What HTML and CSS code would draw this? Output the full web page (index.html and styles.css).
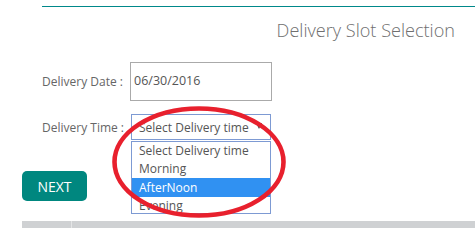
FILE: index.html
```html
<!DOCTYPE html>
<html>
<head>
<meta charset="utf-8">
<link rel="stylesheet" href="styles.css">
</head>
<body>
<div class="page">
  <div class="rule"></div>
  <h1 class="title">Delivery Slot Selection</h1>
  <div class="form">
    <div class="row row-date">
      <label class="label">Delivery Date :</label>
      <div class="date-input">06/30/2016</div>
    </div>
    <div class="row row-time">
      <label class="label">Delivery Time :</label>
      <div class="select-wrap">
        <div class="select">
          <span>Select Delivery time</span>
          <span class="arrow"></span>
        </div>
        <ul class="options">
          <li>Select Delivery time</li>
          <li>Morning</li>
          <li class="active">AfterNoon</li>
          <li>Evening</li>
        </ul>
      </div>
    </div>
  </div>
  <div class="actions">
    <button class="next">NEXT</button>
  </div>
  <div class="footer-bar">
    <div class="cell first"></div>
    <div class="cell"></div>
  </div>
  <svg class="circle" width="475" height="228" viewBox="0 0 475 228">
    <ellipse cx="199" cy="156" rx="84.5" ry="53.5" fill="none" stroke="#e8202d" stroke-width="4.6"/>
  </svg>
</div>
</body>
</html>
```

FILE: styles.css
```css
html, body {
  margin: 0;
  padding: 0;
  background: #fff;
}
body {
  width: 475px;
  height: 228px;
  overflow: hidden;
  font-family: "Open Sans", "Liberation Sans", sans-serif;
}
.page {
  position: relative;
  width: 475px;
  height: 228px;
}
.rule {
  margin: 6px 0 0 42px;
  height: 1px;
  background: #00888a;
}
.title {
  margin: 11px 20px 0 0;
  text-align: right;
  font-weight: 300;
  font-size: 18.1px;
  line-height: 24px;
  color: #6f6f6f;
}
.form {
  padding-left: 42px;
}
.row {
  display: flex;
  align-items: center;
}
.row-date {
  margin-top: 20px;
}
.row-time {
  margin-top: 13px;
}
.label {
  width: 88px;
  font-size: 12px;
  color: #666;
}
.date-input {
  box-sizing: border-box;
  width: 142px;
  height: 39px;
  border: 1px solid #aaa;
  padding: 0 0 2px 3px;
  display: flex;
  align-items: center;
  font-size: 12.5px;
  color: #555;
}
.select-wrap {
  position: relative;
  margin-left: 1px;
}
.select {
  box-sizing: border-box;
  width: 140px;
  height: 26px;
  border: 1px solid #7d9ad3;
  display: flex;
  align-items: center;
  justify-content: space-between;
  padding: 0 8px 0 7px;
  font-size: 12px;
  color: #555;
}
.arrow {
  flex-shrink: 0;
  width: 0;
  height: 0;
  border-left: 3.5px solid transparent;
  border-right: 3.5px solid transparent;
  border-top: 6px solid #444;
  margin-top: -3px;
}
.options {
  position: absolute;
  left: 0;
  top: 27px;
  box-sizing: border-box;
  width: 140px;
  height: 73px;
  margin: 0;
  padding: 0;
  list-style: none;
  background: #fff;
  border: 1px solid #7d9ad3;
  overflow: hidden;
}
.options li {
  height: 18px;
  line-height: 17px;
  padding-left: 7px;
  font-size: 12px;
  color: #555;
}
.options li.active {
  height: 19px;
  line-height: 19px;
  background: #3091f2;
  color: #fff;
}
.actions {
  padding-left: 22px;
  margin-top: 31px;
}
.next {
  display: block;
  width: 65px;
  height: 30px;
  border: none;
  border-radius: 5px;
  background: #00877f;
  color: #fff;
  font-family: "Open Sans", "Liberation Sans", sans-serif;
  font-size: 14px;
  padding: 0;
}
.footer-bar {
  margin: 20px 0 0 22px;
  height: 8px;
  display: flex;
}
.cell {
  flex: 1;
  background: #cfd1d3;
}
.cell.first {
  flex: 0 0 49px;
  border-right: 1px solid #e4e5e6;
}
.circle {
  position: absolute;
  left: 0;
  top: 0;
  pointer-events: none;
}
```
